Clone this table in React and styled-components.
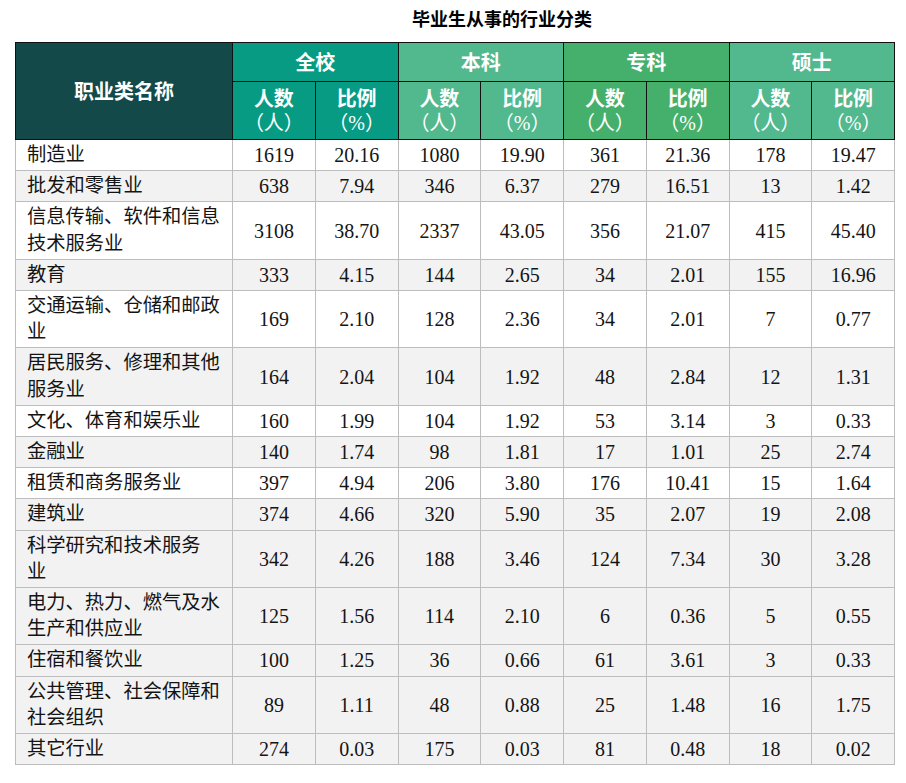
import React from 'react';
import styled, { createGlobalStyle } from 'styled-components';

const colors = {
  nameHead: '#134a49',
  all: '#089b84',
  bachelor: '#52b88e',
  college: '#45b06c',
  master: '#52b88e',
  headLine: '#111',
  bodyLine: '#bdbdbd',
  stripe: '#f2f2f2',
  text: '#141414'
};

const groups = [
  { name: '全校', color: colors.all },
  { name: '本科', color: colors.bachelor },
  { name: '专科', color: colors.college },
  { name: '硕士', color: colors.master }
];

const rows = [
  { name: ['制造业'], values: ['1619', '20.16', '1080', '19.90', '361', '21.36', '178', '19.47'] },
  { name: ['批发和零售业'], values: ['638', '7.94', '346', '6.37', '279', '16.51', '13', '1.42'], gray: true },
  { name: ['信息传输、软件和信息', '技术服务业'], values: ['3108', '38.70', '2337', '43.05', '356', '21.07', '415', '45.40'] },
  { name: ['教育'], values: ['333', '4.15', '144', '2.65', '34', '2.01', '155', '16.96'], gray: true },
  { name: ['交通运输、仓储和邮政', '业'], values: ['169', '2.10', '128', '2.36', '34', '2.01', '7', '0.77'] },
  { name: ['居民服务、修理和其他', '服务业'], values: ['164', '2.04', '104', '1.92', '48', '2.84', '12', '1.31'], gray: true },
  { name: ['文化、体育和娱乐业'], values: ['160', '1.99', '104', '1.92', '53', '3.14', '3', '0.33'] },
  { name: ['金融业'], values: ['140', '1.74', '98', '1.81', '17', '1.01', '25', '2.74'], gray: true },
  { name: ['租赁和商务服务业'], values: ['397', '4.94', '206', '3.80', '176', '10.41', '15', '1.64'] },
  { name: ['建筑业'], values: ['374', '4.66', '320', '5.90', '35', '2.07', '19', '2.08'], gray: true },
  { name: ['科学研究和技术服务', '业'], values: ['342', '4.26', '188', '3.46', '124', '7.34', '30', '3.28'], gray: true },
  { name: ['电力、热力、燃气及水', '生产和供应业'], values: ['125', '1.56', '114', '2.10', '6', '0.36', '5', '0.55'], gray: true },
  { name: ['住宿和餐饮业'], values: ['100', '1.25', '36', '0.66', '61', '3.61', '3', '0.33'], gray: true },
  { name: ['公共管理、社会保障和', '社会组织'], values: ['89', '1.11', '48', '0.88', '25', '1.48', '16', '1.75'], gray: true },
  { name: ['其它行业'], values: ['274', '0.03', '175', '0.03', '81', '0.48', '18', '0.02'], gray: true }
];

const GlobalStyle = createGlobalStyle`
  html, body {
    margin: 0;
    padding: 0;
    background: #fff;
  }
`;

const Page = styled.div`
  padding: 0 11px 0 15px;
  width: 880px;
`;

const Title = styled.h1`
  margin: 0;
  height: 42px;
  padding-left: 94px;
  padding-bottom: 6px;
  box-sizing: border-box;
  display: flex;
  align-items: center;
  justify-content: center;
  font-family: "Noto Sans CJK SC", sans-serif;
  font-size: 18px;
  font-weight: 700;
  color: #000;
`;

const Table = styled.table`
  width: 880px;
  table-layout: fixed;
  border-collapse: collapse;
`;

const HeadCell = styled.th`
  background: ${p => p.bg};
  border: 1px solid ${colors.headLine};
  color: #fff;
  font-family: "Noto Sans CJK SC", sans-serif;
  font-size: 20px;
  font-weight: 700;
  text-align: center;
  vertical-align: middle;
  line-height: ${p => (p.sub ? '25.5px' : '26px')};
  padding: ${p => (p.sub ? '3px 0' : '6px 0')};
`;

const Paren = styled.span`
  display: block;
  font-weight: 400;
  font-family: "Liberation Serif", "Noto Sans CJK SC", serif;
`;

const Row = styled.tr`
  background: ${p => (p.gray ? colors.stripe : '#fff')};
`;

const NameCell = styled.td`
  border: 1.5px solid ${colors.bodyLine};
  font-family: "Liberation Serif", "Noto Sans CJK SC", serif;
  font-size: 19.3px;
  line-height: 26.2px;
  color: ${colors.text};
  padding: 2px 10px 2px 11px;
  white-space: nowrap;
`;

const ValueCell = styled.td`
  border: 1.5px solid ${colors.bodyLine};
  font-family: "Liberation Serif", "Noto Sans CJK SC", serif;
  font-size: 20px;
  line-height: 26.2px;
  color: ${colors.text};
  text-align: center;
  vertical-align: middle;
  padding: 2px 0;
`;

const Line = styled.span`
  display: block;
`;

export default function App() {
  return (
    <>
      <GlobalStyle />
      <Page>
        <Title>毕业生从事的行业分类</Title>
        <Table>
          <colgroup>
            <col style={{ width: 217 }} />
            {Array.from({ length: 8 }).map((_, i) => (
              <col key={i} />
            ))}
          </colgroup>
          <thead>
            <tr>
              <HeadCell rowSpan={2} bg={colors.nameHead}>职业类名称</HeadCell>
              {groups.map(g => (
                <HeadCell key={g.name} colSpan={2} bg={g.color}>{g.name}</HeadCell>
              ))}
            </tr>
            <tr>
              {groups.map(g => (
                <React.Fragment key={g.name}>
                  <HeadCell sub bg={g.color}>人数<Paren>（人）</Paren></HeadCell>
                  <HeadCell sub bg={g.color}>比例<Paren>（%）</Paren></HeadCell>
                </React.Fragment>
              ))}
            </tr>
          </thead>
          <tbody>
            {rows.map(r => (
              <Row key={r.name.join('')} gray={r.gray}>
                <NameCell>
                  {r.name.map(l => (
                    <Line key={l}>{l}</Line>
                  ))}
                </NameCell>
                {r.values.map((v, i) => (
                  <ValueCell key={i}>{v}</ValueCell>
                ))}
              </Row>
            ))}
          </tbody>
        </Table>
      </Page>
    </>
  );
}
